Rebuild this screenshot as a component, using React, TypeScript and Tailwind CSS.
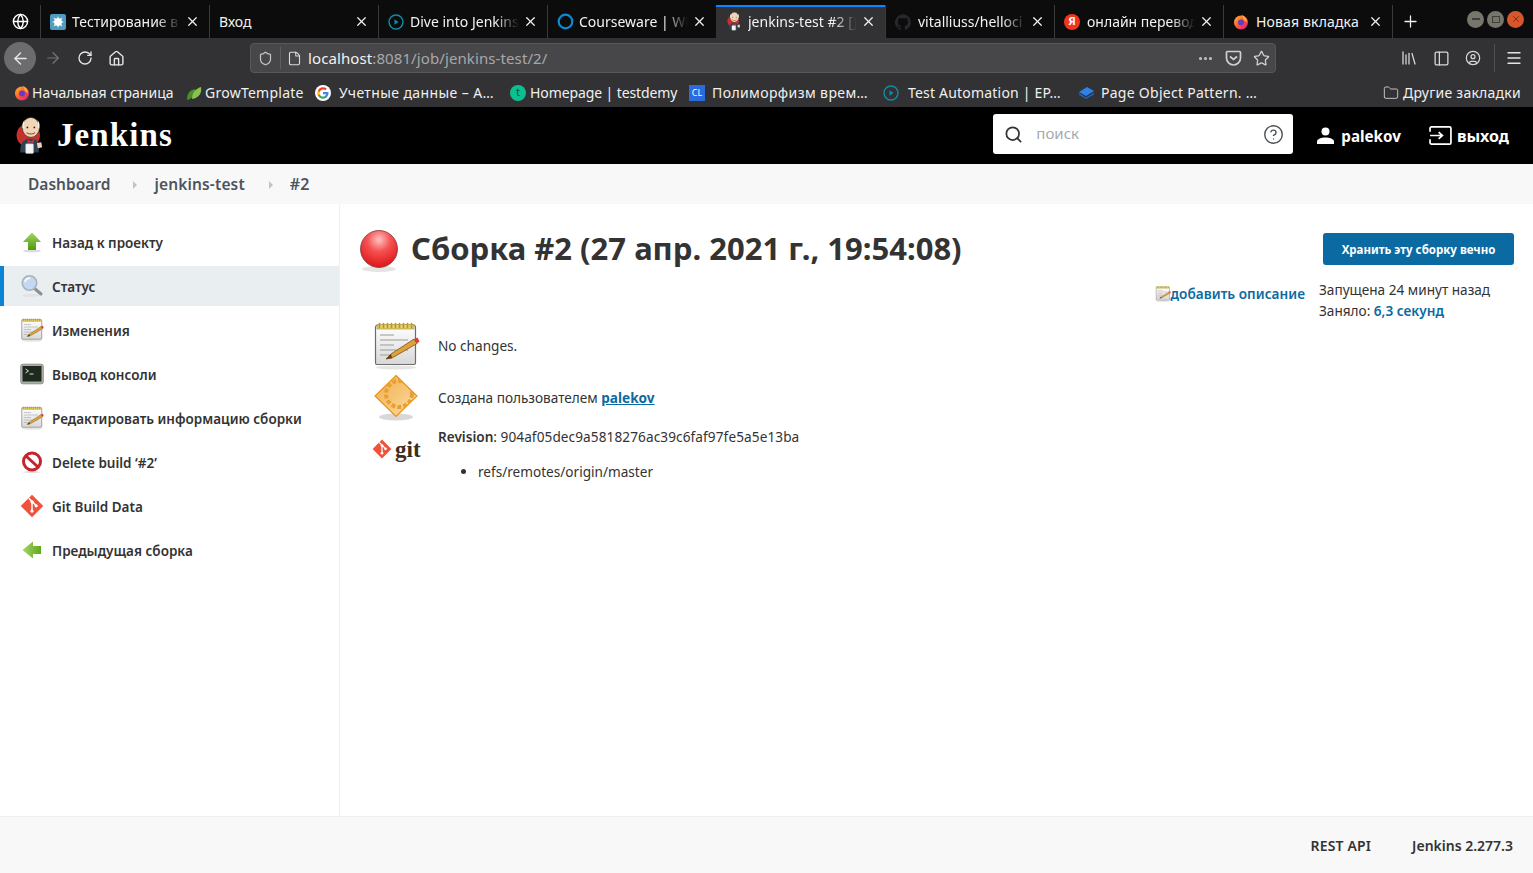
import { ArrowLeft, ArrowRight, CircleHelp, CircleUser, Ellipsis, File, Folder, Globe, House, Library, Menu, PanelLeft, Plus, RotateCw, Search, Shield, Star, X } from 'lucide-react';

const fade = '[mask-image:linear-gradient(to_right,black_78%,transparent_100%)]';

function JenkinsHead({ size = 16 }: { size?: number }) {
  return (
    <svg width={size} height={size * 1.3} viewBox="0 0 32 42">
      <circle cx="14" cy="21" r="13.500" fill="#c8302c" />
      <path d="M5 41c-1-8 2-14 8-16l9 1c4 2 5 7 4 15z" fill="#2e4256" />
      <ellipse cx="17" cy="12" rx="10" ry="11.500" fill="#f0d6b7" stroke="#3a2a20" strokeWidth="0.800" />
      <path d="M7.500 13c-1-4 0-7 2-9-.5 3-.5 6 0 9zM26.500 13c1-4 .5-7-1.500-9 .5 3 .5 6 0 9z" fill="#f4f0e8" />
      <path d="M13 26l4 2 4-2-1 4-3-1-3 1z" fill="#d33833" />
      <circle cx="13" cy="12" r="1" fill="#222" />
      <circle cx="21" cy="12" r="1" fill="#222" />
      <path d="M12 18c3 2 7 2 10 0" stroke="#8a4b38" strokeWidth="1.200" fill="none" />
      <rect x="11" y="31" width="9" height="11" rx="1" fill="#f5f5f5" stroke="#bbb" strokeWidth="0.500" />
      <path d="M24 30l5-1 1 6-5 1z" fill="#f0d6b7" />
    </svg>
  );
}

function FirefoxIcon() {
  return (
    <svg width="16" height="16" viewBox="0 0 16 16">
      <defs>
        <linearGradient id="ffx" x1="0" y1="0" x2="1" y2="1">
          <stop offset="0" stopColor="#ffbd2e" />
          <stop offset="0.5" stopColor="#ff5a36" />
          <stop offset="1" stopColor="#d6128f" />
        </linearGradient>
      </defs>
      <circle cx="8" cy="8.500" r="7" fill="url(#ffx)" />
      <path d="M9 0.800c2.500 1.600 5 4 5 7.500L11 6z" fill="#ffb52c" />
      <circle cx="8" cy="8.500" r="3" fill="#6a3bc0" />
    </svg>
  );
}

function CourseDot() {
  return (
    <svg width="17" height="17" viewBox="0 0 17 17">
      <circle cx="8.500" cy="8.500" r="6.800" fill="none" stroke="#1187d0" strokeWidth="2.200" />
    </svg>
  );
}

function PlayRing() {
  return (
    <svg width="16" height="16" viewBox="0 0 16 16">
      <circle cx="8" cy="8" r="7" fill="none" stroke="#0e8ea7" strokeWidth="1.400" />
      <path d="M6.500 5.200l4 2.800-4 2.800z" fill="#0e8ea7" />
    </svg>
  );
}

function GithubDark() {
  return (
    <svg width="16" height="16" viewBox="0 0 24 24" fill="#26282c">
      <path d="M12 .5a12 12 0 00-3.800 23.400c.6.1.8-.3.8-.6v-2c-3.300.7-4-1.600-4-1.600-.6-1.400-1.400-1.800-1.400-1.800-1.100-.7.1-.7.1-.7 1.200.1 1.800 1.200 1.800 1.200 1.100 1.800 2.800 1.300 3.500 1 .1-.8.4-1.300.8-1.600-2.700-.3-5.500-1.300-5.500-5.900 0-1.300.5-2.400 1.200-3.200-.1-.3-.5-1.500.1-3.200 0 0 1-.3 3.300 1.200a11.500 11.500 0 016 0c2.300-1.500 3.300-1.200 3.300-1.200.6 1.700.2 2.900.1 3.200.8.8 1.200 1.900 1.200 3.200 0 4.600-2.800 5.600-5.500 5.900.4.400.8 1.100.8 2.200v3.300c0 .3.2.7.8.6A12 12 0 0012 .5z" />
    </svg>
  );
}

function YandexIcon() {
  return (
    <div className="flex h-4 w-4 items-center justify-center rounded-full bg-[#f2361c] text-[11px] font-bold text-white">Я</div>
  );
}

function SplatIcon() {
  return (
    <div className="flex h-4 w-4 items-center justify-center rounded-[2px] bg-[#4f9cc0]">
      <svg width="12" height="12" viewBox="0 0 12 12" fill="#fff">
        <circle cx="6" cy="6" r="3.800" />
        <path d="M6 0l1 3H5zM6 12l1-3H5zM0 6l3-1v2zM12 6L9 5v2zM1.500 1.500l3 1.500-1.500 1.500zM10.500 1.500L7.500 3 9 4.500zM1.500 10.500L3 7.500 4.500 9zM10.500 10.500L9 7.500 7.500 9z" />
      </svg>
    </div>
  );
}

function GrowIcon() {
  return (
    <svg width="16" height="16" viewBox="0 0 16 16">
      <path d="M1 15C1 8 4 5 9 4c0 6-3 10-8 11z" fill="#4c8c2b" />
      <path d="M6 14c0-6 3-10 9-12 1 6-2 11-9 12z" fill="#8cc152" />
    </svg>
  );
}

function GoogleIcon() {
  return (
    <div className="flex h-4 w-4 items-center justify-center rounded-full bg-white">
      <svg width="12" height="12" viewBox="0 0 24 24">
        <path d="M23 12.200c0-.8-.1-1.600-.2-2.300H12v4.400h6.200c-.3 1.400-1.100 2.600-2.300 3.400v2.800h3.700c2.100-2 3.400-4.900 3.400-8.300z" fill="#4285f4" />
        <path d="M12 23.500c3.100 0 5.700-1 7.600-2.800l-3.700-2.800c-1 .7-2.300 1.100-3.900 1.100-3 0-5.500-2-6.400-4.700H1.800v2.900A11.500 11.500 0 0012 23.500z" fill="#34a853" />
        <path d="M5.600 14.300a7 7 0 010-4.500V6.900H1.800a11.500 11.500 0 000 10.300z" fill="#fbbc05" />
        <path d="M12 5c1.700 0 3.200.6 4.400 1.700l3.300-3.300A11.500 11.500 0 001.800 6.900l3.800 2.900C6.500 7 9 5 12 5z" fill="#ea4335" />
      </svg>
    </div>
  );
}

function BookIcon() {
  return (
    <svg width="17" height="16" viewBox="0 0 17 16">
      <path d="M1 7l8-5 7 4-8 5z" fill="#2f80e8" />
      <path d="M1 8l7 4.500 8-5v2l-8 4.500L1 10z" fill="#1a63c8" />
    </svg>
  );
}

const tabs = [
  { title: 'Тестирование в', icon: <SplatIcon />, gap: 'ml-[6px]', fade: true },
  { title: 'Вход', icon: null, gap: '', fade: false },
  { title: 'Dive into Jenkins', icon: <PlayRing />, gap: 'ml-[6px]', fade: true },
  { title: 'Courseware | WD', icon: <CourseDot />, gap: 'ml-[5px]', fade: true },
  { title: 'jenkins-test #2 [J', icon: <JenkinsHead size={14} />, gap: 'ml-[7px]', fade: true, active: true },
  { title: 'vitalliuss/helloci', icon: <GithubDark />, gap: 'ml-[7px]', fade: true },
  { title: 'онлайн перевод', icon: <YandexIcon />, gap: 'ml-[7px]', fade: true },
  { title: 'Новая вкладка', icon: <FirefoxIcon />, gap: 'ml-[7px] tracking-[0.15px]', fade: false },
];

const bookmarks = [
  { label: 'Начальная страница', icon: <FirefoxIcon />, width: 'w-[172px]', gap: 'ml-[2px]' },
  { label: 'GrowTemplate', icon: <GrowIcon />, width: 'w-[129px]', gap: 'ml-[3px] tracking-[0.25px]' },
  { label: 'Учетные данные – А…', icon: <GoogleIcon />, width: 'w-[195px]', gap: 'ml-[8px] tracking-[0.4px]' },
  { label: 'Homepage | testdemy', icon: <div className="flex h-4 w-4 items-center justify-center rounded-full bg-[#0bbf91] text-[10px] text-[#0b4a3b]">t</div>, width: 'w-[179px]', gap: 'ml-[4px] tracking-[-0.1px]' },
  { label: 'Полиморфизм врем…', icon: <div className="flex h-4 w-4 items-center justify-center bg-[#2a6be0] text-[9px] text-white">CL</div>, width: 'w-[194px]', gap: 'ml-[7px] tracking-[0.4px]' },
  { label: 'Test Automation | EP…', icon: <PlayRing />, width: 'w-[195px]', gap: 'ml-[9px] tracking-[0.2px]' },
  { label: 'Page Object Pattern. …', icon: <BookIcon />, width: 'w-[200px]', gap: 'ml-[6px] tracking-[0.27px]' },
];

function ArrowUpIcon() {
  return (
    <svg width="24" height="24" viewBox="0 0 24 24">
      <defs>
        <linearGradient id="greenUp" x1="0" y1="0" x2="0" y2="1">
          <stop offset="0" stopColor="#a5d46a" />
          <stop offset="1" stopColor="#4e9a06" />
        </linearGradient>
      </defs>
      <ellipse cx="12" cy="21" rx="9" ry="1.500" fill="#ddd" />
      <path d="M12 2.500L21 12h-5v8H8v-8H3z" fill="url(#greenUp)" />
    </svg>
  );
}

function ArrowLeftIcon() {
  return (
    <svg width="24" height="24" viewBox="0 0 24 24">
      <defs>
        <linearGradient id="greenLeft" x1="0" y1="0" x2="1" y2="0">
          <stop offset="0" stopColor="#a5d46a" />
          <stop offset="1" stopColor="#5fa81c" />
        </linearGradient>
      </defs>
      <path d="M2.500 12L13 3.500V8h8v8h-8v4.500z" fill="url(#greenLeft)" />
    </svg>
  );
}

function MagnifierIcon() {
  return (
    <svg width="24" height="24" viewBox="0 0 24 24">
      <ellipse cx="11" cy="21.500" rx="9" ry="1.500" fill="#e2e2e2" />
      <path d="M14 14l7 6" stroke="#8b8f94" strokeWidth="3" strokeLinecap="round" />
      <circle cx="9.500" cy="9" r="7.200" fill="#c4d8f2" stroke="#a9b3bd" strokeWidth="1.600" />
      <path d="M5 8c.5-2.500 2.500-3.800 5-3.800" stroke="#fff" strokeWidth="1.600" fill="none" />
    </svg>
  );
}

function NotepadIcon({ size = 24, id }: { size?: number; id: string }) {
  return (
    <svg width={size} height={size} viewBox="0 0 48 48" className="shrink-0">
      <defs>
        <linearGradient id={id} x1="0" y1="0" x2="0" y2="1">
          <stop offset="0" stopColor="#ffffff" />
          <stop offset="1" stopColor="#d7d7d7" />
        </linearGradient>
      </defs>
      <ellipse cx="24" cy="45.500" rx="20" ry="2" fill="#e5e5e5" />
      <rect x="3.500" y="3.500" width="40" height="39" rx="1.500" fill={`url(#${id})`} stroke="#6d6d6d" strokeWidth="1.200" />
      <rect x="5" y="2.500" width="37" height="4.500" fill="#e6cf6e" stroke="#a08a2c" strokeWidth="0.600" />
      {[7.500, 11.500, 15.500, 19.500, 23.500, 27.500, 31.500, 35.500, 39.500].map((x) => (
        <rect key={x} x={x - 0.8} y="0.800" width="1.600" height="5.500" rx="0.800" fill="#b99a20" />
      ))}
      {[13, 18, 23, 28, 33].map((y, i) => (
        <line key={y} x1="8" x2={i % 2 ? 36 : 22} y1={y} y2={y} stroke="#9a9a9a" strokeWidth="1" />
      ))}
      <path d="M14 37l5-5L42 17l3 4.500L20 36z" fill="#dda23e" stroke="#7a5410" strokeWidth="0.800" />
      <path d="M42 17l3 4.500 2.500-2-2-4z" fill="#d9413b" />
      <path d="M14 37l5-5 1 4z" fill="#5a4320" />
    </svg>
  );
}

function ConsoleIcon() {
  return (
    <svg width="24" height="24" viewBox="0 0 24 24">
      <rect x="0.500" y="2" width="23" height="20" rx="2.500" fill="#a9aca6" stroke="#777" strokeWidth="0.500" />
      <rect x="2.500" y="4" width="19" height="15.500" fill="#1f2a1e" />
      <path d="M5.500 7l3 2-3 2" stroke="#d8e0d4" strokeWidth="1" fill="none" />
      <path d="M9.500 12h4" stroke="#d8e0d4" strokeWidth="1" />
    </svg>
  );
}

function NoEntryIcon() {
  return (
    <svg width="24" height="24" viewBox="0 0 24 24">
      <ellipse cx="12" cy="22" rx="8" ry="1.200" fill="#ddd" />
      <circle cx="12" cy="11.500" r="8.500" fill="#fff" stroke="#c5222b" strokeWidth="3" />
      <path d="M6 6l12 11" stroke="#c5222b" strokeWidth="3" />
    </svg>
  );
}

function GitDiamond({ size = 24 }: { size?: number }) {
  return (
    <svg width={size} height={size} viewBox="0 0 26 26" className="shrink-0">
      <path d="M13 .800L25.200 13 13 25.200.8 13z" fill="#f0513a" />
      <path d="M9.500 4.500l3.500 3.500v10.500M13 8l4.500 4.500" stroke="#fff" strokeWidth="1.600" fill="none" />
      <circle cx="13" cy="8.500" r="1.800" fill="#fff" />
      <circle cx="13" cy="18.500" r="1.800" fill="#fff" />
      <circle cx="17.500" cy="12.800" r="1.800" fill="#fff" />
    </svg>
  );
}

function RedBall() {
  return (
    <svg width="40" height="44" viewBox="0 0 40 44" className="-ml-px shrink-0">
      <defs>
        <radialGradient id="ball" cx="0.500" cy="0.250" r="0.700">
          <stop offset="0" stopColor="#ffc4c4" />
          <stop offset="0.450" stopColor="#f65252" />
          <stop offset="1" stopColor="#e01b1f" />
        </radialGradient>
      </defs>
      <ellipse cx="20" cy="40" rx="17" ry="3" fill="#e4e4e4" />
      <circle cx="20" cy="20" r="18.500" fill="url(#ball)" stroke="#7d3a3f" strokeWidth="0.800" />
    </svg>
  );
}

function GearDiamond() {
  return (
    <svg width="48" height="48" viewBox="0 0 48 48" className="shrink-0">
      <defs>
        <linearGradient id="orange" x1="0" y1="0" x2="1" y2="1">
          <stop offset="0" stopColor="#f2ae48" />
          <stop offset="1" stopColor="#fbdca6" />
        </linearGradient>
        <clipPath id="diamondClip">
          <path d="M24 1.500L45 22 24 42.500 3 22z" />
        </clipPath>
      </defs>
      <ellipse cx="24" cy="43" rx="17" ry="3.500" fill="#d8d8d8" />
      <path d="M24 1.500L45 22 24 42.500 3 22z" fill="url(#orange)" stroke="#e8921a" strokeWidth="1.200" />
      <g clipPath="url(#diamondClip)">
        <circle cx="27" cy="20" r="13" fill="none" stroke="#e8a035" strokeWidth="4" strokeDasharray="4 2" />
      </g>
    </svg>
  );
}

function LogoutIcon() {
  return (
    <svg width="23" height="19" viewBox="0 0 24 20" fill="none" stroke="#fff" strokeWidth="1.800">
      <path d="M1 6V2.500A1.500 1.500 0 012.500 1h19A1.500 1.500 0 0123 2.500v15a1.500 1.500 0 01-1.500 1.500h-19A1.500 1.500 0 011 17.500V14" />
      <path d="M1 10h12M10 6.500l4 3.500-4 3.500" />
    </svg>
  );
}

function UserIcon() {
  return (
    <svg width="17" height="17" viewBox="0 0 17 17" fill="#fff">
      <circle cx="8.500" cy="4.500" r="4" />
      <path d="M0 17v-2.500c0-2.500 4.500-4 8.500-4s8.500 1.500 8.500 4V17z" />
    </svg>
  );
}

const tasks = [
  { label: 'Назад к проекту', icon: <ArrowUpIcon /> },
  { label: 'Статус', icon: <MagnifierIcon />, active: true },
  { label: 'Изменения', icon: <NotepadIcon id="np1" /> },
  { label: 'Вывод консоли', icon: <ConsoleIcon /> },
  { label: 'Редактировать информацию сборки', icon: <NotepadIcon id="np2" /> },
  { label: 'Delete build ‘#2’', icon: <NoEntryIcon /> },
  { label: 'Git Build Data', icon: <GitDiamond /> },
  { label: 'Предыдущая сборка', icon: <ArrowLeftIcon /> },
];

export default function App() {
  return (
    <div className="flex h-screen w-full flex-col overflow-hidden bg-white font-['Noto_Sans',sans-serif] text-[14px] text-[#333]">
      {/* Tab strip */}
      <div className="flex h-[38px] shrink-0 items-stretch bg-[#0c0c0d] text-[14px] text-[#f3f3f3]">
        <div className="flex w-[40px] items-center justify-center pt-[4px]">
          <Globe size={17} strokeWidth={2} color="#fff" />
        </div>
        {tabs.map((tab) => (
          <div
            key={tab.title}
            className={`mt-[5px] flex h-[33px] w-[169px] shrink-0 items-center pr-[9px] ${tab.active ? 'border-t-2 border-[#0a84ff] bg-[#323234] pb-[2px] pl-[11px]' : 'border-l border-[#3a3a3c] pl-[9px]'}`}
          >
            {tab.icon}
            <span className={`min-w-0 flex-1 overflow-hidden whitespace-nowrap ${tab.gap} ${tab.fade ? fade : ''}`}>{tab.title}</span>
            <X size={15} strokeWidth={2} color="#f0f0f0" className="ml-[4px] shrink-0" />
          </div>
        ))}
        <div className="mt-[5px] flex h-[33px] w-[36px] items-center justify-center border-l border-[#3a3a3c]">
          <Plus size={19} strokeWidth={1.600} color="#f0f0f0" />
        </div>
        <div className="ml-auto flex items-center gap-[3px] pr-[9px]">
          <div className="flex h-[17px] w-[17px] items-center justify-center rounded-full bg-[#77766c]">
            <div className="h-[1.500px] w-[8px] bg-[#3f3e38]" />
          </div>
          <div className="flex h-[17px] w-[17px] items-center justify-center rounded-full bg-[#77766c]">
            <div className="h-[7px] w-[8px] border border-[#3f3e38]" />
          </div>
          <div className="flex h-[17px] w-[17px] items-center justify-center rounded-full bg-[#d9552b]">
            <X size={10} strokeWidth={2} color="#6e2b14" />
          </div>
        </div>
      </div>

      {/* Navigation toolbar */}
      <div className="flex h-[40px] shrink-0 items-center bg-[#323234]">
        <div className="ml-[4px] flex h-[32px] w-[32px] items-center justify-center rounded-full bg-[#6c6c6e]">
          <ArrowLeft size={19} strokeWidth={1.800} color="#e6e6e6" />
        </div>
        <ArrowRight size={18} strokeWidth={1.600} color="#757577" className="ml-[8px]" />
        <RotateCw size={16} strokeWidth={2} color="#e4e4e4" className="ml-[15px]" />
        <House size={17} strokeWidth={2} color="#e4e4e4" className="ml-[15px]" />
        <div className="ml-[125px] flex h-[30px] w-[1026px] items-center rounded-[4px] border border-[#58585a] bg-[#474749] text-[15px] tracking-[0.1px]">
          <Shield size={15} strokeWidth={2} color="#c2c2c4" className="ml-[7px]" />
          <div className="ml-[7px] h-[22px] w-px bg-[#5f5f61]" />
          <File size={15} strokeWidth={1.800} color="#dcdcdc" className="ml-[6px]" />
          <span className="ml-[6px] text-[#f2f2f2]">localhost</span>
          <span className="text-[#a8a8aa]">:8081/job/jenkins-test/2/</span>
          <Ellipsis size={17} strokeWidth={2.500} color="#c2c2c4" className="ml-auto" />
          <svg width="17" height="16" viewBox="0 0 17 16" fill="none" stroke="#d0d0d2" strokeWidth="1.700" className="ml-[11px]">
            <path d="M1.500 2.500A1 1 0 012.500 1.500h12a1 1 0 011 1V8a7 7 0 01-14 0z" />
            <path d="M5 6.500l3.500 3 3.500-3" />
          </svg>
          <Star size={17} strokeWidth={1.800} color="#d0d0d2" className="ml-[11px] mr-[5px]" />
        </div>
        <Library size={18} strokeWidth={1.700} color="#d8d8da" className="ml-[124px]" />
        <PanelLeft size={17} strokeWidth={1.800} color="#d8d8da" className="ml-[15px]" />
        <CircleUser size={16} strokeWidth={1.800} color="#d8d8da" className="ml-[15px]" />
        <div className="ml-[13px] h-[28px] w-px bg-[#4f4f51]" />
        <Menu size={18} strokeWidth={1.800} color="#e4e4e4" className="ml-[10px]" />
      </div>

      {/* Bookmarks */}
      <div className="flex h-[29px] shrink-0 items-center bg-[#323234] pl-[14px] text-[14px] text-[#f0f0f0]">
        {bookmarks.map((b) => (
          <div key={b.label} className={`flex shrink-0 items-center ${b.width}`}>
            {b.icon}
            <span className={`whitespace-nowrap ${b.gap}`}>{b.label}</span>
          </div>
        ))}
        <div className="ml-auto flex items-center gap-[4px] pr-[12px]">
          <Folder size={16} strokeWidth={1.300} color="#d8d8da" />
          <span className="whitespace-nowrap tracking-[0.25px]">Другие закладки</span>
        </div>
      </div>

      {/* Jenkins header */}
      <header className="flex h-[57px] shrink-0 items-center bg-black pl-[16px] pr-[24px] text-white">
        <JenkinsHead size={28} />
        <span className="ml-[13px] font-['Liberation_Serif',serif] text-[33px] font-bold tracking-[1.100px]">Jenkins</span>
        <div className="mb-[3px] ml-auto flex h-[40px] w-[300px] items-center rounded-[3px] bg-white pl-[11px] pr-[9px] text-[#333]">
          <Search size={19} strokeWidth={2.200} color="#333" />
          <span className="mb-[1px] ml-[13px] text-[15px] text-[#a5a9b0]">поиск</span>
          <CircleHelp size={21} strokeWidth={1.600} color="#4a4f57" className="ml-auto" />
        </div>
        <div className="ml-[24px]"><UserIcon /></div>
        <span className="ml-[7px] mt-[1px] text-[15.200px] font-bold">palekov</span>
        <div className="ml-[28px]"><LogoutIcon /></div>
        <span className="ml-[5px] text-[16px] font-bold">выход</span>
      </header>

      {/* Breadcrumbs */}
      <nav className="flex h-[40px] shrink-0 items-center bg-[#f8f8f8] pl-[28px] pt-[1px] text-[15.500px] font-semibold text-[#4d545d]">
        <span>Dashboard</span>
        <span className="ml-[23px] mr-[17px] h-0 w-0 border-y-[4px] border-l-[4px] border-y-transparent border-l-[#c0c4c8]" />
        <span className="tracking-[0.15px]">jenkins-test</span>
        <span className="ml-[24px] mr-[17px] h-0 w-0 border-y-[4px] border-l-[4px] border-y-transparent border-l-[#c0c4c8]" />
        <span className="mb-[2px] text-[16px]">#2</span>
      </nav>

      <div className="flex min-h-0 flex-1">
        {/* Sidebar */}
        <aside className="w-[340px] shrink-0 border-r border-[#f0f0f0] pt-[18px]">
          <div className="flex flex-col gap-[4px]">
            {tasks.map((t) => (
              <div
                key={t.label}
                className={`flex h-[40px] items-center text-[13.500px] font-semibold text-[#333] ${t.active ? 'border-l-4 border-[#0b84d6] bg-[#e9eef0] pl-[16px]' : 'pl-[20px]'}`}
              >
                <div className="flex w-[24px] items-center justify-center">{t.icon}</div>
                <span className="ml-[8px] whitespace-nowrap pt-[2px]">{t.label}</span>
              </div>
            ))}
          </div>
        </aside>

        {/* Build page */}
        <main className="min-w-0 flex-1 pl-[20px] pr-[19px] pt-[25px] text-[13.600px]">
          <div className="flex items-start justify-between">
            <div className="flex items-center">
              <RedBall />
              <h1 className="mb-[6px] ml-[12px] whitespace-nowrap text-[31px] font-bold leading-[38px] text-[#333]">Сборка #2 (27 апр. 2021 г., 19:54:08)</h1>
            </div>
            <button className="mt-[4px] h-[32px] w-[191px] rounded-[3px] bg-[#0b6aa2] pt-[1px] text-[11.500px] font-bold text-white">Хранить эту сборку вечно</button>
          </div>

          <div className="mt-[6px] flex justify-end">
            <div className="mt-[5px] flex items-center self-start font-semibold text-[#0b6aa2]">
              <NotepadIcon size={16} id="np3" />
              <span className="whitespace-nowrap tracking-[0.03px]">добавить описание</span>
            </div>
            <div className="ml-[14px] w-[195px] leading-[21px] text-[#333]">
              <div>Запущена 24 минут назад</div>
              <div>Заняло: <span className="font-semibold text-[#0b6aa2]">6,3 секунд</span></div>
            </div>
          </div>

          <div className="-mt-[1px] flex flex-col">
            <div className="flex h-[52px] items-center pl-[12px]">
              <NotepadIcon size={48} id="np4" />
              <span className="ml-[18px]">No changes.</span>
            </div>
            <div className="flex h-[52px] items-center pl-[12px]">
              <GearDiamond />
              <span className="ml-[18px]">Создана пользователем <a className="font-bold text-[#0b6aa2] underline">palekov</a></span>
            </div>
            <div className="flex pl-[12px]">
              <div className="flex h-[48px] w-[48px] items-center pt-[2px]">
                <GitDiamond size={20} />
                <span className="ml-[3px] font-['Liberation_Serif',serif] text-[23px] font-bold leading-none text-[#3d2e1a]">git</span>
              </div>
              <div className="ml-[18px]">
                <div className="mt-[3px]"><b className="font-semibold">Revision</b>: <span className="tracking-[0.1px]">904af05dec9a5818276ac39c6faf97fe5a5e13ba</span></div>
                <ul className="ml-[40px] mt-[15px] list-disc"><li>refs/remotes/origin/master</li></ul>
              </div>
            </div>
          </div>
        </main>
      </div>

      {/* Footer */}
      <footer className="flex h-[57px] shrink-0 items-center justify-end gap-[41px] border-t border-[#eee] bg-[#f8f8f8] pr-[20px] font-semibold text-[#333]">
        <span className="tracking-[0.15px]">REST API</span>
        <span>Jenkins 2.277.3</span>
      </footer>
    </div>
  );
}
